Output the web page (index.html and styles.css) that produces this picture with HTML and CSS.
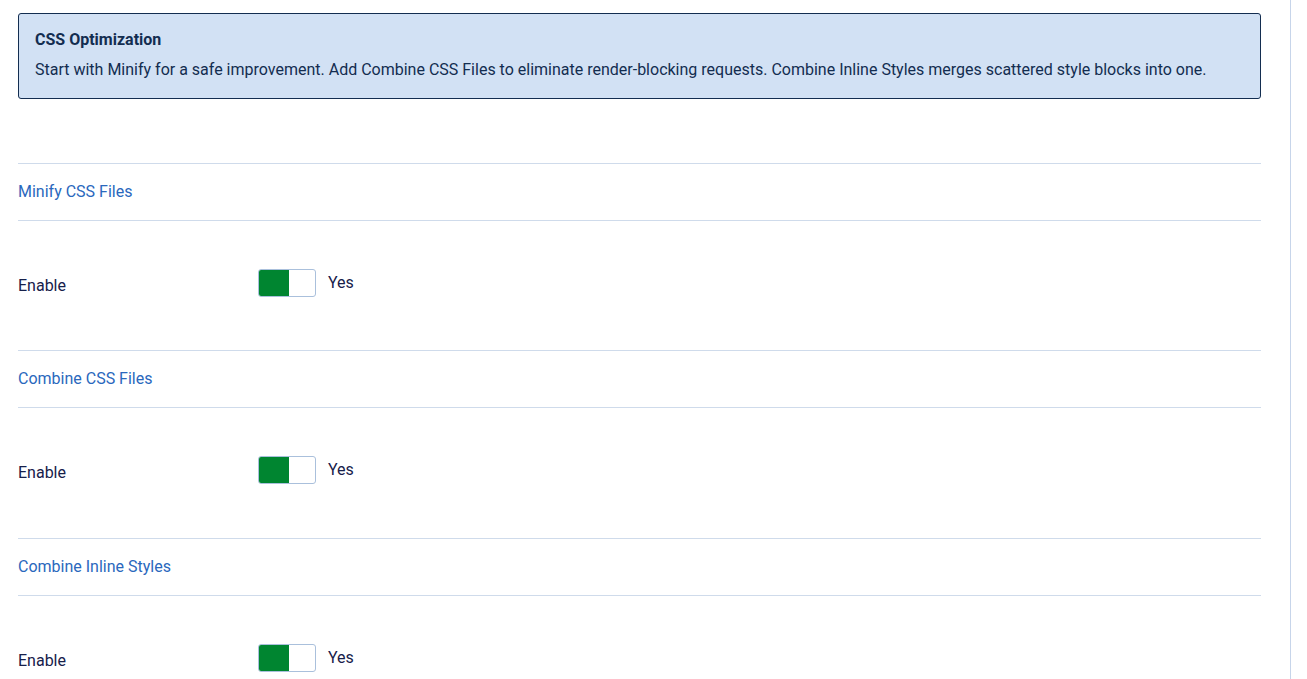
FILE: index.html
```html
<!DOCTYPE html>
<html lang="en">
<head>
    <meta charset="UTF-8">
    <meta name="viewport" content="width=device-width, initial-scale=1.0">
    <title>CSS Optimization</title>
    <link rel="stylesheet" href="styles.css">
</head>
<body>
    <div class="main">
        <div class="alert-info">
            <h4 class="alert-title">CSS Optimization</h4>
            <p>Start with Minify for a safe improvement. Add Combine CSS Files to eliminate render-blocking requests. Combine Inline Styles merges scattered style blocks into one.</p>
        </div>

        <div class="options">
            <fieldset class="option-group">
                <div class="group-title">Minify CSS Files</div>
                <div class="control-row">
                    <label class="control-label">Enable</label>
                    <div class="switcher on"><span class="slide"></span></div>
                    <span class="switcher-text">Yes</span>
                </div>
            </fieldset>

            <fieldset class="option-group">
                <div class="group-title">Combine CSS Files</div>
                <div class="control-row">
                    <label class="control-label">Enable</label>
                    <div class="switcher on"><span class="slide"></span></div>
                    <span class="switcher-text">Yes</span>
                </div>
            </fieldset>

            <fieldset class="option-group">
                <div class="group-title">Combine Inline Styles</div>
                <div class="control-row">
                    <label class="control-label">Enable</label>
                    <div class="switcher on"><span class="slide"></span></div>
                    <span class="switcher-text">Yes</span>
                </div>
            </fieldset>
        </div>
    </div>
</body>
</html>
```

FILE: styles.css
```css
* {
    margin: 0;
    padding: 0;
    box-sizing: border-box;
}

html, body {
    height: 100%;
}

body {
    font-family: Roboto, "Liberation Sans", sans-serif;
    font-size: 16px;
    background: #fff;
    color: #16204a;
    overflow: hidden;
}

.main {
    width: 1291px;
    min-height: 100%;
    padding: 13px 29px 0 18px;
    border-right: 1px solid #c7d5ea;
}

.alert-info {
    background: #d2e1f4;
    border: 1px solid #132d50;
    border-radius: 3px;
    padding: 14px 16px 16px;
    color: #132d50;
    line-height: 24px;
}

.alert-title {
    font-size: 16px;
    font-weight: 700;
    margin-bottom: 6px;
}

.options {
    margin-top: 64px;
}

.option-group {
    border: none;
}

.group-title {
    border-top: 1px solid #cfdbeb;
    border-bottom: 1px solid #cfdbeb;
    height: 58px;
    line-height: 56px;
    color: #2a68bd;
}

.control-row {
    display: flex;
    align-items: center;
    padding: 48px 0 53px;
}

.option-group:last-child {
    margin-top: 1px;
}

.control-label {
    width: 240px;
    padding-top: 4px;
}

/* on/off switch, green half marks "on" */
.switcher {
    width: 58px;
    height: 28px;
    border: 1px solid #aac0dc;
    border-radius: 3px;
    background: #fff;
    overflow: hidden;
}

.switcher .slide {
    display: block;
    width: 30px;
    height: 100%;
    background: #008530;
}

.switcher-text {
    margin-left: 12px;
    margin-top: -1px;
}
```
